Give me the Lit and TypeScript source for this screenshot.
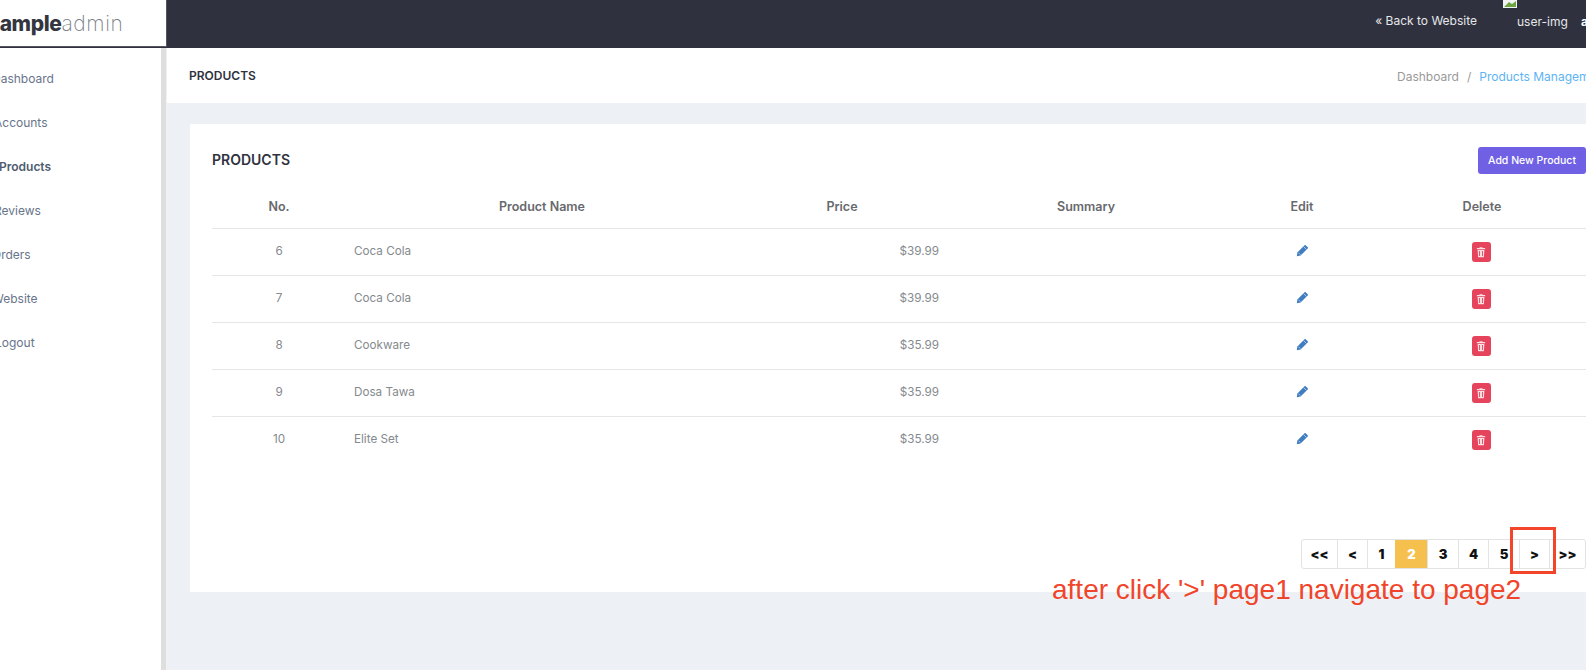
import { LitElement, html, css, svg } from 'lit'
import { customElement } from 'lit/decorators.js'

const navItems = [
  { label: 'Dashboard', x: -8 },
  { label: 'Accounts', x: -6 },
  { label: 'Products', x: -1, active: true },
  { label: 'Reviews', x: -6 },
  { label: 'Orders', x: -8 },
  { label: 'Website', x: -8 },
  { label: 'Logout', x: -5 }
]

const rows = [
  { no: 6, name: 'Coca Cola', price: '$39.99' },
  { no: 7, name: 'Coca Cola', price: '$39.99' },
  { no: 8, name: 'Cookware', price: '$35.99' },
  { no: 9, name: 'Dosa Tawa', price: '$35.99' },
  { no: 10, name: 'Elite Set', price: '$35.99' }
]

const pages = [
  { label: '<<', width: 35 },
  { label: '<', width: 30 },
  { label: '1', width: 28 },
  { label: '2', width: 32 },
  { label: '3', width: 31 },
  { label: '4', width: 30 },
  { label: '5', width: 31 },
  { label: '>', width: 30 },
  { label: '>>', width: 36 }
]

const pencilIcon = svg`
  <path d="M1 15l.7-4.600 8.800-8.800a1 1 0 0 1 1.400 0l2.500 2.500a1 1 0 0 1 0 1.400L5.600 14.300 1 15z" />
  <path d="M9.300 3.200l3.500 3.500" stroke="#fff" stroke-width=".7" fill="none" />
  <path d="M3 10.700l2.300 2.300" stroke="#cfe0f2" stroke-width=".9" fill="none" />
`
const trashIcon = svg`<path d="M2.500 2.800h3.200l.6-1.100h3.400l.6 1.100h3.200v1.600h-11V2.800zM3.500 5.400h9l-.6 8.800a1 1 0 0 1-1 .9H5.100a1 1 0 0 1-1-.9L3.500 5.400zm2 1.400v6.400h1.200V6.800H5.500zm3.800 0v6.400h1.200V6.800H9.300z" />`

@customElement('app-root')
export class AppRoot extends LitElement {
  static styles = css`
    :host {
      display: block;
      height: 100vh;
      overflow: hidden;
      position: relative;
      background: #edf1f5;
      font-family: Inter, Roboto, sans-serif;
      font-size: 12px;
      color: #67757c;
    }

    .topbar {
      display: flex;
      height: 48px;
      background: #2f323e;
    }

    .logo {
      width: 167px;
      height: 47px;
      box-sizing: border-box;
      background: #fff;
      border-right: 1px solid #55565f;
      border-bottom: 1px solid #55565f;
      overflow: hidden;
      display: flex;
      align-items: center;
      flex-shrink: 0;
      font-size: 21px;
    }

    .logo-text {
      margin-left: -12px;
      color: #7b7f88;
      font-weight: 200;
      letter-spacing: 0.6px;
    }

    .logo-text b {
      color: #34363f;
      font-weight: 800;
      letter-spacing: -0.4px;
    }

    .top-right {
      flex: 1;
      display: flex;
      color: #e6e7ea;
      justify-content: flex-end;
      overflow: hidden;
    }

    .back {
      margin-top: 13px;
      margin-right: 26px;
      white-space: nowrap;
    }

    .user {
      width: 83px;
      display: flex;
      flex-shrink: 0;
      gap: 13px;
    }

    .user-img {
      width: 65px;
      flex-shrink: 0;
      position: relative;
      padding: 14px 0 0 14px;
      box-sizing: border-box;
      white-space: nowrap;
    }

    .broken {
      position: absolute;
      left: 0;
      top: -6px;
      width: 14px;
      height: 14px;
    }

    .user-name {
      color: #fff;
      font-weight: 700;
      margin-top: 14px;
    }

    .body {
      display: flex;
      height: 622px;
    }

    .sidebar {
      width: 167px;
      flex-shrink: 0;
      box-sizing: border-box;
      background: #fff;
      border-right: 1px solid #f1f1f1;
      box-shadow: inset -5px 0 0 #dedede;
      padding-top: 9px;
      overflow: hidden;
    }

    .nav-item {
      height: 44px;
      line-height: 44px;
      font-size: 12px;
      color: #68748a;
      white-space: nowrap;
    }

    .nav-item.active {
      color: #4f5b6e;
      font-weight: 600;
    }

    .main {
      flex: 1;
      min-width: 0;
      overflow: hidden;
    }

    .page-title {
      height: 55px;
      background: #fff;
      display: flex;
      align-items: center;
      justify-content: space-between;
      padding-left: 22px;
      overflow: hidden;
    }

    .page-title h4 {
      margin: 0;
      font-size: 12px;
      font-weight: 600;
      color: #2f323e;
    }

    .crumbs {
      display: flex;
      gap: 8px;
      white-space: nowrap;
      flex-shrink: 0;
      width: 189px;
      padding-top: 2px;
      color: #9a9a9a;
    }

    .crumbs a {
      color: #5db3f5;
    }

    .card {
      margin: 21px 0 0 23px;
      height: 468px;
      background: #fff;
      padding-left: 22px;
      position: relative;
    }

    .card-head {
      display: flex;
      height: 71px;
      align-items: center;
      justify-content: space-between;
      box-sizing: border-box;
    }

    .card-head h3 {
      margin: 0;
      font-size: 14px;
      font-weight: 600;
      color: #2f323e;
    }

    .add-btn {
      width: 108px;
      height: 27px;
      border-radius: 3px;
      background: #7060e4;
      color: #fff;
      font-size: 10.500px;
      font-weight: 500;
      display: flex;
      align-items: center;
      justify-content: center;
      margin-top: 1px;
    }

    table {
      width: 1374px;
      border-collapse: collapse;
      table-layout: fixed;
    }

    th {
      box-sizing: border-box;
      height: 33px;
      font-size: 12.500px;
      font-weight: 600;
      color: #67696d;
      padding: 0 0 9px;
      border-bottom: 1px solid #e6e6e6;
    }

    td {
      box-sizing: border-box;
      height: 47px;
      padding: 0;
      font-size: 11.700px;
      color: #858a8e;
      border-bottom: 1px solid #e6e6e6;
      text-align: center;
    }

    tr:last-child td {
      border-bottom: none;
    }

    .c-no { width: 134px; }
    .c-name { width: 392px; }
    .c-price { width: 208px; }
    .c-summary { width: 280px; }
    .c-edit { width: 152px; }

    td.no {
      padding-bottom: 1px;
    }

    td.name {
      text-align: left;
      padding: 0 0 1px 8px;
    }

    td.price {
      text-align: right;
      padding: 0 7px 1px 0;
    }

    td.del {
      padding-right: 2px;
    }

    .pencil {
      width: 13px;
      height: 13px;
      fill: #3f7cc0;
      vertical-align: middle;
      margin-bottom: 2px;
    }

    .trash-btn {
      display: inline-flex;
      align-items: center;
      justify-content: center;
      width: 19px;
      height: 20px;
      border-radius: 3px;
      background: #e5445c;
      vertical-align: middle;
    }

    .trash {
      width: 12px;
      height: 12px;
      fill: #fbdfe3;
    }

    .pager {
      position: absolute;
      left: 1111px;
      top: 415px;
      display: flex;
      height: 30px;
      box-sizing: border-box;
      border: 1px solid #e3e3e3;
      border-radius: 3px;
      background: #fff;
    }

    .pager span {
      display: flex;
      align-items: center;
      justify-content: center;
      box-sizing: border-box;
      font-size: 13px;
      font-weight: 900;
      color: #111;
      border-left: 1px solid #e3e3e3;
    }

    .pager span:first-child {
      border-left: none;
    }

    .pager span.current {
      background: #f6c04f;
      color: #fff;
      border-left-color: #f6c04f;
    }

    .mark {
      position: absolute;
      left: 1510px;
      top: 527px;
      width: 46px;
      height: 47px;
      box-sizing: border-box;
      border: 3px solid #f2452a;
    }

    .note {
      position: absolute;
      left: 1052px;
      top: 574px;
      font-family: "Liberation Sans", Arial, sans-serif;
      font-size: 28px;
      color: #f0452a;
      white-space: nowrap;
    }
  `

  render() {
    return html`
      <header class="topbar">
        <div class="logo"><span class="logo-text"><b>sample</b>admin</span></div>
        <div class="top-right">
          <span class="back">« Back to Website</span>
          <div class="user">
            <div class="user-img">
              <svg class="broken" viewBox="0 0 14 14">
                <path d="M0 0h14v14H0z" fill="#f2f3f3" />
                <path d="M1 13l5-5 3 2 4-3v6z" fill="#6ea544" />
              </svg>
              user-img
            </div>
            <span class="user-name">admin</span>
          </div>
        </div>
      </header>
      <div class="body">
        <nav class="sidebar">
          ${navItems.map(
            (item) => html`<div class="nav-item ${item.active ? 'active' : ''}" style="margin-left:${item.x}px">${item.label}</div>`
          )}
        </nav>
        <main class="main">
          <div class="page-title">
            <h4>PRODUCTS</h4>
            <div class="crumbs"><span>Dashboard</span><span>/</span><a>Products Management</a></div>
          </div>
          <section class="card">
            <div class="card-head">
              <h3>PRODUCTS</h3>
              <div class="add-btn">Add New Product</div>
            </div>
            <table>
              <thead>
                <tr>
                  <th class="c-no">No.</th>
                  <th class="c-name">Product Name</th>
                  <th class="c-price">Price</th>
                  <th class="c-summary">Summary</th>
                  <th class="c-edit">Edit</th>
                  <th>Delete</th>
                </tr>
              </thead>
              <tbody>
                ${rows.map(
                  (row) => html`
                    <tr>
                      <td class="no">${row.no}</td>
                      <td class="name">${row.name}</td>
                      <td class="price">${row.price}</td>
                      <td></td>
                      <td><svg class="pencil" viewBox="0 0 16 16">${pencilIcon}</svg></td>
                      <td class="del"><span class="trash-btn"><svg class="trash" viewBox="0 0 16 16">${trashIcon}</svg></span></td>
                    </tr>
                  `
                )}
              </tbody>
            </table>
            <div class="pager">
              ${pages.map(
                (p) => html`<span class=${p.label === '2' ? 'current' : ''} style="width:${p.width}px">${p.label}</span>`
              )}
            </div>
          </section>
        </main>
      </div>
      <div class="mark"></div>
      <div class="note">after click '&gt;' page1 navigate to page2</div>
    `
  }
}
